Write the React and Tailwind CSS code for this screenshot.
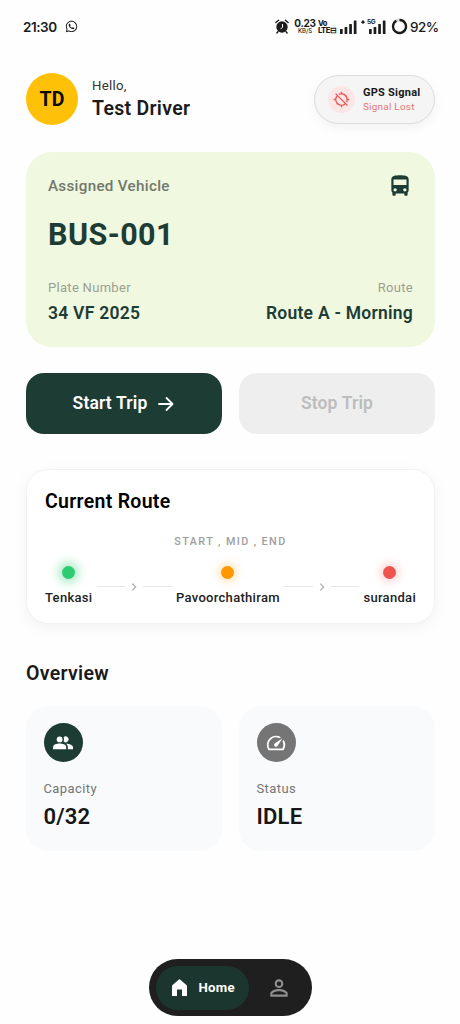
import React from "react";
import { MdDirectionsBus, MdGpsOff, MdSpeed, MdPersonOutline } from "react-icons/md";
import { FaWhatsapp } from "react-icons/fa";

function AlarmIcon() {
  return (
    <svg className="block h-[15px] w-[14px] shrink-0" viewBox="0 0 14 15">
      <circle cx="7" cy="8" r="5.7" fill="#1c1c1c" />
      <path d="M0.9 3.6 L3.6 1.2 M13.1 3.6 L10.4 1.2 M3 12.6 L1.9 14 M11 12.6 L12.1 14" stroke="#1c1c1c" strokeWidth="1.4" strokeLinecap="round" />
      <path d="M7.5 5 V8.4 L5.6 9.8" stroke="#fff" strokeWidth="1" fill="none" />
    </svg>
  );
}

function SignalBars() {
  return (
    <svg className="block h-[14px] w-[17px] shrink-0" viewBox="0 0 17 14" fill="#1c1c1c">
      <rect x="0" y="9" width="2.7" height="5" rx="0.5" />
      <rect x="4.6" y="7" width="2.7" height="7" rx="0.5" />
      <rect x="9.2" y="4" width="2.7" height="10" rx="0.5" />
      <rect x="13.8" y="0.5" width="2.7" height="13.5" rx="0.5" />
    </svg>
  );
}

function PeopleIcon() {
  return (
    <svg className="block size-[22px]" viewBox="0 0 22 22" fill="currentColor">
      <circle cx="7.6" cy="7.4" r="2.9" />
      <path d="M11.6 9.5 A4.4 4.4 0 0 0 11.6 5.3 A2.9 2.9 0 1 1 11.6 9.5Z" />
      <path d="M1 15.4 C1 12.6 4.8 11.6 7.6 11.6 S14.2 12.6 14.2 15.4 V17.2 H1Z" />
      <path d="M14 11.7 C17.6 11.7 21 12.9 21 15.4 V17.2 H15.9 V15.4 C15.9 13.8 15.2 12.6 14 11.7Z" />
    </svg>
  );
}

function StatusBar() {
  return (
    <div className="flex h-[53px] items-center pl-[23px] font-['Inter',sans-serif] text-[#1c1c1c]">
      <span className="w-[42px] text-[13.5px] font-semibold leading-4 tracking-[-0.45px]">21:30</span>
      <FaWhatsapp className="size-[13px]" />
      <div className="ml-[197px] flex items-center">
        <AlarmIcon />
        <div className="ml-[5px] w-[22px] text-center">
          <div className="whitespace-nowrap text-[10px] font-bold leading-[9px] tracking-[-0.3px]">0.23</div>
          <div className="whitespace-nowrap text-[6px] font-medium leading-[6px]">KB/S</div>
        </div>
        <div className="ml-[2px] w-[19px] whitespace-nowrap text-[7.5px] font-extrabold leading-[7px] tracking-[-0.5px]">
          <div>Vo</div>
          <div>LTE⊟</div>
        </div>
        <div className="ml-[3px]"><SignalBars /></div>
        <div className="relative ml-[12px]">
          <SignalBars />
          <span className="absolute -left-[2px] -top-px bg-[#fefefe] text-[6.5px] font-bold leading-[7px] tracking-[-0.3px]">5G</span>
          <svg className="absolute -left-[8px] top-0 size-[4px]" viewBox="0 0 4 4"><path d="M2 0 L4 2.2 L2 4 L0 2.2Z" fill="#1c1c1c" /></svg>
        </div>
        <svg className="ml-[5px] block size-[17px]" viewBox="0 0 17 17">
          <circle cx="8.5" cy="8.5" r="6.5" fill="none" stroke="#d4d4d4" strokeWidth="2.3" />
          <path d="M8.5 2 A6.5 6.5 0 1 1 5.4 2.8" fill="none" stroke="#1c1c1c" strokeWidth="2.3" />
        </svg>
        <span className="ml-[2px] text-[13.5px] font-medium leading-4 tracking-[-0.5px]">92%</span>
      </div>
    </div>
  );
}

function Header() {
  return (
    <div className="mt-5 flex h-[52px] items-center">
      <div className="flex size-[52px] items-center justify-center rounded-full bg-[#ffc107] pt-px text-[19.5px] font-bold text-[#0b0b0b]">TD</div>
      <div className="ml-[14px]">
        <div className="text-[13.2px] leading-[18px] tracking-[0.3px] text-[#333]">Hello,</div>
        <div className="mt-[2px] text-[19.5px] font-semibold leading-[24px] tracking-[0.3px] text-[#1a1a1a]">Test Driver</div>
      </div>
      <div className="ml-auto flex h-[49px] w-[121px] items-center rounded-full border border-[#dcdcdc] bg-[#f5f5f5] pl-[13px] shadow-[0_4px_11px_rgba(0,0,0,0.05)]">
        <div className="flex size-[27px] items-center justify-center rounded-full bg-[#fde6e6]">
          <MdGpsOff className="size-[17px] text-[#e85d5a]" />
        </div>
        <div className="ml-[8px]">
          <div className="whitespace-nowrap text-[11px] font-bold leading-[15px] tracking-[0.25px] text-[#1a1a1a]">GPS Signal</div>
          <div className="whitespace-nowrap text-[9.8px] leading-[14px] tracking-[0.3px] text-[#e57373]">Signal Lost</div>
        </div>
      </div>
    </div>
  );
}

function VehicleCard() {
  return (
    <div className="mt-[27px] h-[195px] rounded-[26px] bg-[#f0f8e0] px-[22px] pt-[21px]">
      <div className="flex items-start justify-between">
        <span className="mt-[3px] text-[15.2px] font-medium leading-5 tracking-[0.3px] text-[#72786d]">Assigned Vehicle</span>
        <MdDirectionsBus className="size-[26px] text-[#1d3c34]" />
      </div>
      <div className="mt-[17px] text-[30.5px] font-bold leading-[38px] tracking-[0.45px] text-[#1d3c34]">BUS-001</div>
      <div className="mt-[25px] flex justify-between">
        <div>
          <div className="text-[13px] leading-[18px] tracking-[0.3px] text-[#9ba092]">Plate Number</div>
          <div className="mt-[5px] text-[17.5px] font-semibold leading-[22px] tracking-[0.25px] text-[#1d3c34]">34 VF 2025</div>
        </div>
        <div className="text-right">
          <div className="text-[13px] leading-[18px] tracking-[0.3px] text-[#9ba092]">Route</div>
          <div className="mt-[5px] text-[17.5px] font-semibold leading-[22px] tracking-[0.25px] text-[#1d3c34]">Route A - Morning</div>
        </div>
      </div>
    </div>
  );
}

function TripButtons() {
  return (
    <div className="mt-[26px] grid grid-cols-2 gap-[17px]">
      <button className="flex h-[61px] items-center justify-center rounded-[18px] bg-[#1d3c34] text-[17.5px] font-semibold tracking-[0.15px] text-white">
        Start Trip
        <svg className="ml-[10px] block h-[16px] w-[18px]" viewBox="0 0 18 16" fill="none" stroke="white" strokeWidth="1.8" strokeLinecap="round" strokeLinejoin="round">
          <path d="M2 8 H15.5 M9.5 2 L15.5 8 L9.5 14" />
        </svg>
      </button>
      <button className="h-[61px] rounded-[18px] bg-[#eeeeee] text-[17.5px] font-semibold tracking-[0.15px] text-[#bdbdbd]">Stop Trip</button>
    </div>
  );
}

function Connector() {
  return (
    <div className="flex h-[26px] flex-1 items-center px-[4.5px]">
      <div className="h-[1.5px] flex-1 bg-[#e8e8e8]" />
      <svg className="mx-[5px] block h-[8px] w-[8px]" viewBox="0 0 8 8" fill="none" stroke="#aaaaaa" strokeWidth="1.2">
        <path d="M2.3 0.7 L5.6 4 L2.3 7.3" />
      </svg>
      <div className="h-[1.5px] flex-1 bg-[#e8e8e8]" />
    </div>
  );
}

function Stop({ name, dot }) {
  return (
    <div className="flex flex-col items-center">
      <div className={`size-[13px] rounded-full ${dot}`} />
      <div className="mt-[10px] text-[13px] font-medium leading-[18px] tracking-[0.3px] text-[#222]">{name}</div>
    </div>
  );
}

function RouteCard() {
  return (
    <div className="mt-[35px] h-[155px] rounded-[22px] border border-[#f2f2f2] bg-white px-[18px] pt-[20px] shadow-[0_4px_16px_rgba(0,0,0,0.05)]">
      <div className="text-[19.5px] font-semibold leading-6 tracking-[0.3px] text-black">Current Route</div>
      <div className="mt-[20px] text-center text-[10.8px] font-medium leading-4 tracking-[1.4px] text-[#9e9e9e]">START , MID , END</div>
      <div className="mt-[16px] flex items-center">
        <Stop name="Tenkasi" dot="bg-[#2ecc71] shadow-[0_0_10px_4px_rgba(46,204,113,0.4)]" />
        <Connector />
        <Stop name="Pavoorchathiram" dot="bg-[#ff9800] shadow-[0_0_9px_3px_rgba(255,152,0,0.27)]" />
        <Connector />
        <Stop name="surandai" dot="bg-[#ef5350] shadow-[0_0_9px_3px_rgba(239,83,80,0.25)]" />
      </div>
    </div>
  );
}

function OverviewCard({ icon, iconBg, label, value }) {
  return (
    <div className="h-[145px] rounded-[22px] bg-[#f8fafc] px-[17.5px] pt-[17px]">
      <div className={`flex size-[39px] items-center justify-center rounded-full text-white ${iconBg}`}>{icon}</div>
      <div className="mt-[18px] text-[13px] leading-[18px] tracking-[0.4px] text-[#757575]">{label}</div>
      <div className="mt-[5px] text-[22px] font-semibold leading-[28px] tracking-[0.2px] text-[#161616]">{value}</div>
    </div>
  );
}

function BottomNav() {
  return (
    <div className="mx-auto mt-[108px] flex h-[57px] w-[163px] items-center rounded-full bg-[#1f1f1f] px-[7px]">
      <div className="flex h-[44px] w-[93px] items-center rounded-full bg-[#1b362f] pl-[16px]">
        <svg className="block h-[17px] w-[15px]" viewBox="0 0 15 17" fill="white">
          <path d="M0.6 5.9 Q0 6.4 0 7.1 V17 H5 V10.6 H10 V17 H15 V7.1 Q15 6.4 14.4 5.9 L8 0.4 Q7.5 0 7 0.4 Z" />
        </svg>
        <span className="ml-[12px] text-[13.2px] font-bold tracking-[0.3px] text-white">Home</span>
      </div>
      <MdPersonOutline className="ml-[17px] size-[26px] text-[#8f8f8f]" />
    </div>
  );
}

export default function App() {
  return (
    <div className="h-[1024px] w-[460px] overflow-hidden bg-[#fefefe] font-['Roboto',sans-serif]">
      <StatusBar />
      <main className="pl-[26px] pr-[25px]">
        <Header />
        <VehicleCard />
        <TripButtons />
        <RouteCard />
        <h2 className="mt-[38px] text-[19.5px] font-semibold leading-6 tracking-[0.3px] text-[#1a1a1a]">Overview</h2>
        <div className="mt-[20px] grid grid-cols-2 gap-[17px]">
          <OverviewCard icon={<PeopleIcon />} iconBg="bg-[#1d3c34]" label="Capacity" value="0/32" />
          <OverviewCard icon={<MdSpeed className="size-[22px]" />} iconBg="bg-[#757575]" label="Status" value="IDLE" />
        </div>
      </main>
      <BottomNav />
    </div>
  );
}
